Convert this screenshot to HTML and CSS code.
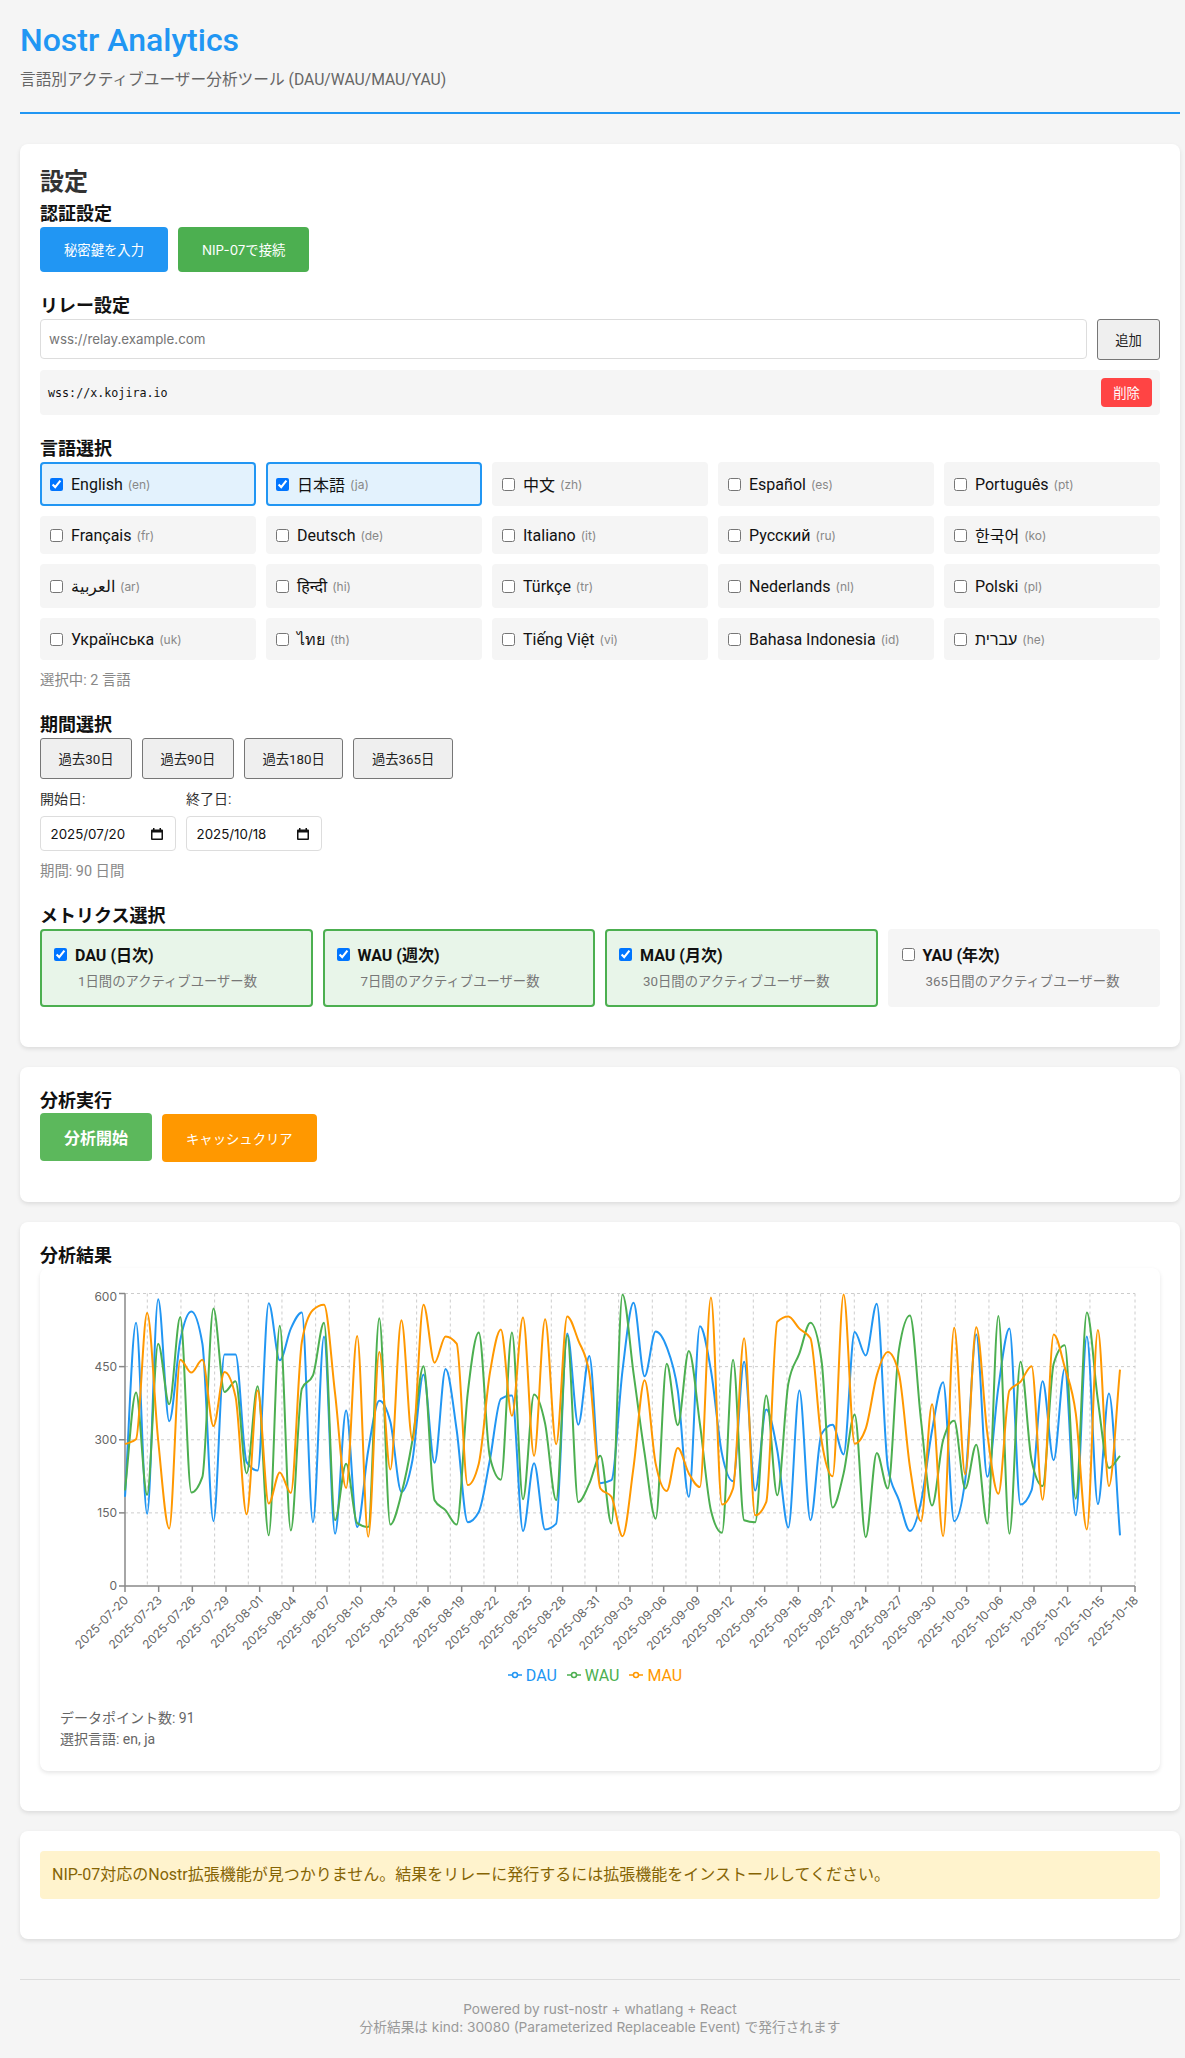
FILE: index.html
```html
<!DOCTYPE html>
<html lang="ja">
<head>
    <meta charset="UTF-8">
    <meta name="viewport" content="width=device-width, initial-scale=1.0">
    <title>Nostr Analytics</title>
    <link rel="stylesheet" href="styles.css">
</head>
<body>
    <header class="page-header">
        <h1>Nostr Analytics</h1>
        <p>言語別アクティブユーザー分析ツール (DAU/WAU/MAU/YAU)</p>
    </header>

    <section class="card settings-card">
        <h2>設定</h2>

        <div class="setting-group">
            <h3>認証設定</h3>
            <div class="button-row">
                <button class="btn btn-blue">秘密鍵を入力</button>
                <button class="btn btn-green">NIP-07で接続</button>
            </div>
        </div>

        <div class="setting-group spaced">
            <h3>リレー設定</h3>
            <div class="relay-form">
                <input class="relay-input" type="text" placeholder="wss://relay.example.com">
                <button class="btn-plain relay-add">追加</button>
            </div>
            <div class="relay-row">
                <code>wss://x.kojira.io</code>
                <button class="btn-remove">削除</button>
            </div>
        </div>

        <div class="setting-group spaced">
            <h3>言語選択</h3>
            <div class="lang-grid">
                <label class="lang-item selected"><input type="checkbox" checked><span>English</span><small>(en)</small></label>
                <label class="lang-item selected"><input type="checkbox" checked><span>日本語</span><small>(ja)</small></label>
                <label class="lang-item"><input type="checkbox"><span>中文</span><small>(zh)</small></label>
                <label class="lang-item"><input type="checkbox"><span>Español</span><small>(es)</small></label>
                <label class="lang-item"><input type="checkbox"><span>Português</span><small>(pt)</small></label>
                <label class="lang-item"><input type="checkbox"><span>Français</span><small>(fr)</small></label>
                <label class="lang-item"><input type="checkbox"><span>Deutsch</span><small>(de)</small></label>
                <label class="lang-item"><input type="checkbox"><span>Italiano</span><small>(it)</small></label>
                <label class="lang-item"><input type="checkbox"><span>Русский</span><small>(ru)</small></label>
                <label class="lang-item"><input type="checkbox"><span>한국어</span><small>(ko)</small></label>
                <label class="lang-item"><input type="checkbox"><span>العربية</span><small>(ar)</small></label>
                <label class="lang-item"><input type="checkbox"><span>हिन्दी</span><small>(hi)</small></label>
                <label class="lang-item"><input type="checkbox"><span>Türkçe</span><small>(tr)</small></label>
                <label class="lang-item"><input type="checkbox"><span>Nederlands</span><small>(nl)</small></label>
                <label class="lang-item"><input type="checkbox"><span>Polski</span><small>(pl)</small></label>
                <label class="lang-item"><input type="checkbox"><span>Українська</span><small>(uk)</small></label>
                <label class="lang-item"><input type="checkbox"><span>ไทย</span><small>(th)</small></label>
                <label class="lang-item"><input type="checkbox"><span>Tiếng Việt</span><small>(vi)</small></label>
                <label class="lang-item"><input type="checkbox"><span>Bahasa Indonesia</span><small>(id)</small></label>
                <label class="lang-item"><input type="checkbox"><span>עברית</span><small>(he)</small></label>
            </div>
            <p class="hint">選択中: 2 言語</p>
        </div>

        <div class="setting-group spaced">
            <h3>期間選択</h3>
            <div class="button-row">
                <button class="btn-plain preset">過去30日</button>
                <button class="btn-plain preset">過去90日</button>
                <button class="btn-plain preset">過去180日</button>
                <button class="btn-plain preset">過去365日</button>
            </div>
            <div class="date-row">
                <div class="date-field">
                    <label>開始日:</label>
                    <div class="date-input">
                        <span>2025/07/20</span>
                        <svg width="14" height="14" viewBox="0 0 14 14"><path d="M3 1h1.500v1.500h5V1H11v1.500h1a1 1 0 0 1 1 1V12a1 1 0 0 1-1 1H2a1 1 0 0 1-1-1V3.500a1 1 0 0 1 1-1h1zM2.500 5.500v6h9v-6z" fill="#111"/></svg>
                    </div>
                </div>
                <div class="date-field">
                    <label>終了日:</label>
                    <div class="date-input">
                        <span>2025/10/18</span>
                        <svg width="14" height="14" viewBox="0 0 14 14"><path d="M3 1h1.500v1.500h5V1H11v1.500h1a1 1 0 0 1 1 1V12a1 1 0 0 1-1 1H2a1 1 0 0 1-1-1V3.500a1 1 0 0 1 1-1h1zM2.500 5.500v6h9v-6z" fill="#111"/></svg>
                    </div>
                </div>
            </div>
            <p class="hint">期間: 90 日間</p>
        </div>

        <div class="setting-group spaced">
            <h3>メトリクス選択</h3>
            <div class="metric-grid">
                <label class="metric-item selected">
                    <span class="metric-title"><input type="checkbox" checked>DAU (日次)</span>
                    <span class="metric-desc">1日間のアクティブユーザー数</span>
                </label>
                <label class="metric-item selected">
                    <span class="metric-title"><input type="checkbox" checked>WAU (週次)</span>
                    <span class="metric-desc">7日間のアクティブユーザー数</span>
                </label>
                <label class="metric-item selected">
                    <span class="metric-title"><input type="checkbox" checked>MAU (月次)</span>
                    <span class="metric-desc">30日間のアクティブユーザー数</span>
                </label>
                <label class="metric-item">
                    <span class="metric-title"><input type="checkbox">YAU (年次)</span>
                    <span class="metric-desc">365日間のアクティブユーザー数</span>
                </label>
            </div>
        </div>
    </section>

    <section class="card run-card">
        <h3>分析実行</h3>
        <div class="run-buttons">
            <button class="btn-run">分析開始</button>
            <button class="btn-cache">キャッシュクリア</button>
        </div>
    </section>

    <section class="card result-card">
        <h3>分析結果</h3>
        <div class="chart-box">
            <svg id="chart" class="chart" width="1080" height="372"></svg>
            <div class="legend">
                <span class="legend-item dau"><svg width="14" height="14" viewBox="0 0 14 14"><line x1="0" y1="7" x2="14" y2="7"/><circle cx="7" cy="7" r="2.500"/></svg>DAU</span>
                <span class="legend-item wau"><svg width="14" height="14" viewBox="0 0 14 14"><line x1="0" y1="7" x2="14" y2="7"/><circle cx="7" cy="7" r="2.500"/></svg>WAU</span>
                <span class="legend-item mau"><svg width="14" height="14" viewBox="0 0 14 14"><line x1="0" y1="7" x2="14" y2="7"/><circle cx="7" cy="7" r="2.500"/></svg>MAU</span>
            </div>
            <div class="chart-stats">
                <p>データポイント数: 91</p>
                <p>選択言語: en, ja</p>
            </div>
        </div>
    </section>

    <section class="card notice-card">
        <div class="notice">NIP-07対応のNostr拡張機能が見つかりません。結果をリレーに発行するには拡張機能をインストールしてください。</div>
    </section>

    <footer class="page-footer">
        <p>Powered by rust-nostr + whatlang + React</p>
        <p>分析結果は kind: 30080 (Parameterized Replaceable Event) で発行されます</p>
    </footer>

    <script src="chart.js"></script>
</body>
</html>
```

FILE: styles.css
```css
* {
    box-sizing: border-box;
}
body {
    margin: 0;
    padding: 20px 5px 20px 20px;
    background-color: #f5f5f5;
    color: #333;
    font-family: Roboto, "Noto Sans CJK JP", "Noto Sans", sans-serif;
}
h1, h2, h3, p {
    margin: 0;
}
button {
    font-family: inherit;
    cursor: pointer;
}

.page-header {
    height: 94px;
    border-bottom: 2px solid #2196f3;
    margin-bottom: 30px;
}
.page-header h1 {
    font-size: 32px;
    font-weight: 500;
    line-height: 40px;
    color: #2196f3;
}
.page-header p {
    margin-top: 8px;
    font-size: 15.7px;
    line-height: 24px;
    color: #666;
}

.card {
    margin-bottom: 20px;
    padding: 20px;
    background: #fff;
    border-radius: 8px;
    box-shadow: 0 2px 4px rgba(0, 0, 0, 0.1);
}
.card h2 {
    font-size: 24px;
    line-height: 36px;
    font-weight: 700;
    color: #333;
}
.card h3 {
    font-size: 18px;
    line-height: 27px;
    font-weight: 700;
    color: #111;
}
.settings-card {
    height: 903px;
}
.spaced {
    margin-top: 20px;
}

.button-row {
    display: flex;
    gap: 10px;
}
.btn {
    height: 45px;
    padding: 0 24px;
    border: none;
    border-radius: 4px;
    color: #fff;
    font-size: 13.33px;
}
.btn-blue {
    background: #2196f3;
}
.btn-green {
    background: #4caf50;
    font-family: Inter, "Noto Sans CJK JP", sans-serif;
}
.btn-plain {
    background: #efefef;
    border: 1px solid #767676;
    border-radius: 3px;
    color: #222;
    font-size: 13.33px;
}
.preset {
    height: 41px;
    padding: 0 17.500px;
}

.relay-form {
    display: flex;
    align-items: flex-start;
    gap: 10px;
}
.relay-input {
    flex: 1;
    height: 40px;
    padding: 0 8px;
    border: 1px solid #ddd;
    border-radius: 4px;
    font-family: Inter, sans-serif;
    font-size: 13.33px;
}
.relay-input::placeholder {
    color: #757575;
}
.relay-add {
    width: 63px;
    height: 41px;
}
.relay-row {
    display: flex;
    align-items: center;
    justify-content: space-between;
    height: 45px;
    margin-top: 10px;
    padding: 0 8px;
    background: #f5f5f5;
    border-radius: 4px;
}
.relay-row code {
    font-family: "DejaVu Sans Mono", monospace;
    font-size: 11.7px;
    color: #111;
}
.btn-remove {
    width: 51px;
    height: 29px;
    padding: 0;
    background: #ff4444;
    border: none;
    border-radius: 4px;
    color: #fff;
    font-size: 13.33px;
}

.lang-grid {
    display: grid;
    grid-template-columns: repeat(5, 1fr);
    grid-template-rows: 44px 38px 44px 42px;
    gap: 10px;
}
.lang-item {
    display: flex;
    align-items: center;
    padding: 0 8px;
    background: #f5f5f5;
    border: 2px solid transparent;
    border-radius: 4px;
    font-size: 16px;
    color: #111;
}
.lang-item.selected {
    background: #e3f2fd;
    border-color: #2196f3;
}
.lang-item input {
    flex: none;
    width: 13px;
    height: 13px;
    margin: 0 8px 0 0;
}
.lang-item small {
    margin-left: 5px;
    font-family: Inter, sans-serif;
    font-size: 12px;
    color: #888;
}
.hint {
    margin-top: 10px;
    font-size: 14.4px;
    line-height: 21px;
    color: #888;
}

.date-row {
    display: flex;
    gap: 10px;
    margin-top: 10px;
}
.date-field label {
    display: block;
    font-size: 14px;
    line-height: 21px;
    margin-bottom: 6px;
}
.date-input {
    display: flex;
    align-items: center;
    justify-content: space-between;
    width: 136px;
    height: 35px;
    padding: 0 11px 0 9.500px;
    background: #fff;
    border: 1px solid #ddd;
    border-radius: 4px;
    font-family: Inter, sans-serif;
    font-size: 13.33px;
    color: #111;
}

.metric-grid {
    display: grid;
    grid-template-columns: repeat(4, 1fr);
    gap: 10px;
}
.metric-item {
    display: block;
    height: 78px;
    padding: 11px 12px 0;
    background: #f5f5f5;
    border: 2px solid transparent;
    border-radius: 4px;
}
.metric-item.selected {
    background: #e8f5e9;
    border-color: #4caf50;
}
.metric-title {
    display: flex;
    align-items: center;
    height: 24px;
    font-size: 16px;
    font-weight: 700;
    color: #111;
}
.metric-title input {
    width: 13px;
    height: 13px;
    margin: 0 8px 0 0;
}
.metric-desc {
    display: block;
    margin: 6px 0 0 24px;
    font-size: 13.33px;
    line-height: 20px;
    color: #777;
}

.run-card {
    height: 135px;
}
.run-buttons {
    display: flex;
    align-items: flex-start;
    gap: 10px;
    margin-top: -1px;
}
.btn-run {
    height: 48px;
    padding: 0 24px;
    background: #5cb85c;
    border: none;
    border-radius: 4px;
    color: #fff;
    font-size: 16px;
    font-weight: 700;
}
.btn-cache {
    height: 48px;
    margin-top: 1px;
    padding: 0 24px;
    background: #ff9800;
    border: none;
    border-radius: 4px;
    color: #fff;
    font-size: 13.33px;
}

.result-card {
    height: 589px;
}
.chart-box {
    margin-top: -1px;
    height: 503px;
    padding: 20px;
    background: #fff;
    border-radius: 8px;
    box-shadow: 0 2px 4px rgba(0, 0, 0, 0.1);
}
.chart {
    display: block;
    overflow: visible;
}
.legend {
    display: flex;
    justify-content: center;
    align-items: center;
    gap: 10px;
    height: 30px;
    font-size: 16px;
    padding-right: 10px;
}
.legend-item {
    display: inline-flex;
    align-items: center;
    gap: 4px;
}
.legend-item line {
    stroke: currentColor;
    stroke-width: 1.5;
}
.legend-item circle {
    fill: #fff;
    stroke: currentColor;
    stroke-width: 1.5;
}
.dau { color: #2196f3; }
.wau { color: #4caf50; }
.mau { color: #ff9800; }
.chart-stats {
    margin-top: 18px;
    font-size: 14px;
    line-height: 21px;
    color: #666;
}
.tick,
.tick-x {
    font-family: Inter, sans-serif;
    font-size: 12px;
    fill: #666;
}

.notice-card {
    height: 108px;
}
.notice {
    height: 48px;
    padding: 0 12px;
    background: #fff3cd;
    border-radius: 4px;
    color: #856404;
    font-size: 16px;
    line-height: 48px;
}

.page-footer {
    margin-top: 40px;
    padding-top: 20px;
    border-top: 1px solid #ddd;
    text-align: center;
    font-family: Inter, "Noto Sans CJK JP", sans-serif;
    font-size: 13.7px;
    line-height: 18px;
    color: #999;
}
```

FILE: chart.js
```js
// values read per day, 2025-07-20 .. 2025-10-18
const series = [
    { color: '#2196f3', values: [183,540,148,588,338,504,563,497,133,475,475,254,237,580,463,528,561,131,512,107,360,121,278,380,337,193,258,434,
        253,445,320,131,152,258,384,391,113,252,116,128,518,331,472,211,217,442,581,430,522,490,401,183,533,442,271,215,460,196,362,278,120,401,135,
        312,331,270,521,473,579,244,176,113,172,319,418,133,217,516,224,408,528,167,196,420,258,446,145,512,168,395,104] },
    { color: '#4caf50', values: [196,397,187,497,373,552,192,224,569,398,420,231,410,104,534,114,405,432,540,135,251,129,121,549,126,189,299,451,
        176,155,126,395,520,265,218,520,178,393,333,176,514,172,210,267,128,598,436,272,138,456,330,482,333,155,109,464,135,131,391,186,415,477,540,
        463,161,231,352,100,273,200,484,555,340,165,299,339,200,290,128,554,107,460,258,205,456,494,179,561,381,242,267] },
    { color: '#ff9800', values: [291,301,560,299,118,464,438,464,328,439,388,147,401,169,233,191,501,566,577,395,201,513,101,480,239,545,299,577,
        458,512,497,207,251,436,526,349,551,267,547,291,553,504,436,200,183,102,244,422,251,195,283,231,203,592,167,200,508,145,172,542,553,528,508,
        299,225,598,292,323,432,480,436,244,133,373,102,530,229,531,313,189,401,419,451,177,516,449,354,116,525,205,444] }
];

const NS = 'http://www.w3.org/2000/svg';
const svg = document.getElementById('chart');
const plot = { left: 65, right: 1075, top: 5.5, bottom: 298 };
const dataStep = 995 / 90;
const tickStep = (plot.right - plot.left) / 30;

function add(name, attrs, text) {
    const el = document.createElementNS(NS, name);
    Object.keys(attrs).forEach(k => el.setAttribute(k, attrs[k]));
    if (text) el.textContent = text;
    svg.appendChild(el);
    return el;
}

function yPos(v) {
    return plot.bottom - (v / 600) * (plot.bottom - plot.top);
}

// same maths as d3 curveMonotoneX
function monotonePath(points) {
    const n = points.length;
    const slopes = [];
    const d = [];
    for (let i = 0; i < n - 1; i++) {
        d.push((points[i + 1][1] - points[i][1]) / (points[i + 1][0] - points[i][0]));
    }
    slopes[0] = d[0];
    slopes[n - 1] = d[n - 2];
    for (let i = 1; i < n - 1; i++) {
        if (d[i - 1] * d[i] <= 0) {
            slopes[i] = 0;
        } else {
            const s = (d[i - 1] + d[i]) / 2;
            slopes[i] = Math.sign(s) * Math.min(Math.abs(d[i - 1]) * 2, Math.abs(d[i]) * 2, Math.abs(s));
        }
    }
    let path = 'M' + points[0][0] + ',' + points[0][1];
    for (let i = 0; i < n - 1; i++) {
        const h = (points[i + 1][0] - points[i][0]) / 3;
        path += 'C' + (points[i][0] + h) + ',' + (points[i][1] + h * slopes[i]) + ' ' +
            (points[i + 1][0] - h) + ',' + (points[i + 1][1] - h * slopes[i + 1]) + ' ' +
            points[i + 1][0] + ',' + points[i + 1][1];
    }
    return path;
}

// grid
const gridAttrs = { stroke: '#ccc', 'stroke-dasharray': '3 3', 'stroke-width': 1 };
[600, 450, 300, 150].forEach(v => {
    add('line', Object.assign({ x1: plot.left, x2: plot.right, y1: yPos(v), y2: yPos(v) }, gridAttrs));
});
for (let k = 0; k < 30; k++) {
    const x = plot.left + 22.3 + k * tickStep;
    if (x > plot.right - 20) break;
    add('line', Object.assign({ x1: x, x2: x, y1: plot.top, y2: plot.bottom }, gridAttrs));
}
add('line', Object.assign({ x1: plot.right, x2: plot.right, y1: plot.top, y2: plot.bottom }, gridAttrs));

// axes
const axisAttrs = { stroke: '#888', 'stroke-width': 1.5 };
add('line', Object.assign({ x1: plot.left, x2: plot.left, y1: plot.top, y2: plot.bottom }, axisAttrs));
add('line', Object.assign({ x1: plot.left, x2: plot.right, y1: plot.bottom, y2: plot.bottom }, axisAttrs));

[0, 150, 300, 450, 600].forEach(v => {
    add('line', Object.assign({ x1: plot.left - 6, x2: plot.left, y1: yPos(v), y2: yPos(v) }, axisAttrs));
    const shift = v === 600 ? 7.7 : 4.4;
    add('text', { x: plot.left - 8, y: yPos(v) + shift, 'text-anchor': 'end', class: 'tick' }, String(v));
});

const start = Date.UTC(2025, 6, 20);
for (let k = 0; k <= 30; k++) {
    const x = plot.left + k * tickStep;
    const labelX = x + 4;
    const labelY = plot.bottom + 15;
    const label = new Date(start + k * 3 * 86400000).toISOString().slice(0, 10);
    add('line', Object.assign({ x1: x, x2: x, y1: plot.bottom, y2: plot.bottom + 6 }, axisAttrs));
    add('text', {
        x: labelX,
        y: labelY,
        'text-anchor': 'end',
        class: 'tick-x',
        transform: 'rotate(-45 ' + labelX + ' ' + labelY + ')'
    }, label);
}

// lines
series.forEach(s => {
    const points = s.values.map((v, i) => [plot.left + i * dataStep, yPos(v)]);
    add('path', { d: monotonePath(points), fill: 'none', stroke: s.color, 'stroke-width': 2 });
});
```
